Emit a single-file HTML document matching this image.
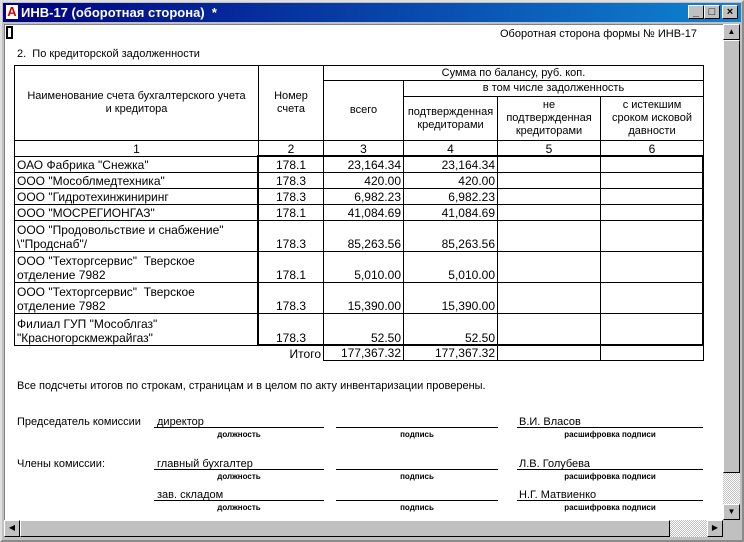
<!DOCTYPE html>
<html><head><meta charset="utf-8"><style>
*{margin:0;padding:0;box-sizing:border-box}
body{width:744px;height:542px;background:#c0c0c0;font-family:"Liberation Sans",Arial,sans-serif;position:relative;overflow:hidden;color:#000}
.abs{position:absolute}
#frame{left:0;top:0;width:744px;height:542px;border:2px outset #dfdfdf;background:#c0c0c0}
#title{left:3px;top:3px;width:738px;height:19px;background:linear-gradient(90deg,#000080,#1084d0);color:#fff;font-weight:bold;font-size:13px;line-height:19px}
.btn{top:5px;width:16px;height:14px;background:#c0c0c0;border:1px solid;border-color:#fff #000 #000 #fff;font-size:11px;line-height:12px;text-align:center;color:#000;font-weight:bold}
#client{left:4px;top:24px;width:719px;height:496px;background:#fff;border-left:1px solid #808080;border-top:1px solid #808080}
table{border-collapse:collapse;table-layout:fixed;position:absolute;left:14px;top:65px;font-size:11px}
td{border:1px solid #000;padding:0 2px;overflow:hidden;white-space:nowrap}
.h{text-align:center;vertical-align:middle;white-space:normal;line-height:13px}
.d td{font-size:12px;vertical-align:bottom;line-height:14px}
.r{text-align:right}.c{text-align:center}
.w{white-space:normal}
.sig{font-size:11px}
.lbl{font-size:8px;font-weight:bold;text-align:center}
.sbtn{background:#c0c0c0;border:1px solid;border-color:#fff #000 #000 #fff;font-size:8px;text-align:center;line-height:14px}
</style></head><body>
<div id="frame" class="abs"></div>
<div id="title" class="abs"><span style="display:inline-block;width:12px;height:14px;background:#fff;color:#d00;font-size:13px;line-height:14px;text-align:center;margin:2px 3px 0 3px;vertical-align:top">A</span>ИНВ-17 (оборотная сторона)&nbsp; *</div>
<div class="abs btn" style="left:688px">_</div>
<div class="abs btn" style="left:704px">□</div>
<div class="abs btn" style="left:722px">×</div>
<div id="client" class="abs"></div>
<div class="abs" style="left:6px;top:26px;width:7px;height:13px;background:#000"><div style="margin:2px;width:3px;height:9px;background:#fff"></div></div>
<div class="abs" style="left:500px;top:28px;font-size:11px">Оборотная сторона формы № ИНВ-17</div>
<div class="abs" style="left:17px;top:48px;font-size:11px">2.&nbsp; По кредиторской задолженности</div>

<table>
<colgroup><col style="width:244px"><col style="width:65px"><col style="width:80px"><col style="width:94px"><col style="width:103px"><col style="width:103px"></colgroup>
<tr style="height:15px"><td class="h" rowspan="3">Наименование счета бухгалтерского учета<br>и кредитора</td><td class="h" rowspan="3">Номер<br>счета</td><td class="h" colspan="4">Сумма по балансу, руб. коп.</td></tr>
<tr style="height:16px"><td class="h" rowspan="2">всего</td><td class="h" colspan="3">в том числе задолженность</td></tr>
<tr style="height:44px"><td class="h">подтвержденная<br>кредиторами</td><td class="h">не<br>подтвержденная<br>кредиторами</td><td class="h">с истекшим<br>сроком исковой<br>давности</td></tr>
<tr style="height:16px;font-size:12px"><td class="c">1</td><td class="c">2</td><td class="c">3</td><td class="c">4</td><td class="c">5</td><td class="c">6</td></tr>
<tr class="d" style="height:16px"><td>ОАО Фабрика "Снежка"</td><td class="c">178.1</td><td class="r">23,164.34</td><td class="r">23,164.34</td><td></td><td></td></tr>
<tr class="d" style="height:16px"><td>ООО "Мособлмедтехника"</td><td class="c">178.3</td><td class="r">420.00</td><td class="r">420.00</td><td></td><td></td></tr>
<tr class="d" style="height:16px"><td>ООО "Гидротехинжиниринг</td><td class="c">178.3</td><td class="r">6,982.23</td><td class="r">6,982.23</td><td></td><td></td></tr>
<tr class="d" style="height:16px"><td>ООО "МОСРЕГИОНГАЗ"</td><td class="c">178.1</td><td class="r">41,084.69</td><td class="r">41,084.69</td><td></td><td></td></tr>
<tr class="d" style="height:31px"><td class="w">ООО "Продовольствие и снабжение"<br>\"Продснаб"/</td><td class="c">178.3</td><td class="r">85,263.56</td><td class="r">85,263.56</td><td></td><td></td></tr>
<tr class="d" style="height:31px"><td class="w">ООО "Техторгсервис"&nbsp; Тверское<br>отделение 7982</td><td class="c">178.1</td><td class="r">5,010.00</td><td class="r">5,010.00</td><td></td><td></td></tr>
<tr class="d" style="height:31px"><td class="w">ООО "Техторгсервис"&nbsp; Тверское<br>отделение 7982</td><td class="c">178.3</td><td class="r">15,390.00</td><td class="r">15,390.00</td><td></td><td></td></tr>
<tr class="d" style="height:32px"><td class="w">Филиал ГУП "Мособлгаз"<br>"Красногорскмежрайгаз"</td><td class="c">178.3</td><td class="r">52.50</td><td class="r">52.50</td><td></td><td></td></tr>
<tr class="d" style="height:15px"><td style="border:none"></td><td class="r" style="border:none;border-right:1px solid #000">Итого</td><td class="r">177,367.32</td><td class="r">177,367.32</td><td></td><td></td></tr>
</table>
<div class="abs" style="left:257px;top:155px;width:447px;height:191px;border:2px solid #000"></div>

<div class="abs" style="left:17px;top:380px;font-size:11px">Все подсчеты итогов по строкам, страницам и в целом по акту инвентаризации проверены.</div>

<div class="abs sig" style="left:17px;top:416px">Председатель комиссии</div>
<div class="abs sig" style="left:157px;top:416px">директор</div>
<div class="abs sig" style="left:519px;top:416px">В.И. Власов</div>
<div class="abs sig" style="left:17px;top:458px">Члены комиссии:</div>
<div class="abs sig" style="left:157px;top:458px">главный бухгалтер</div>
<div class="abs sig" style="left:519px;top:458px">Л.В. Голубева</div>
<div class="abs sig" style="left:157px;top:489px">зав. складом</div>
<div class="abs sig" style="left:519px;top:489px">Н.Г. Матвиенко</div>

<div class="abs" style="left:154px;top:427px;width:170px;border-top:1px solid #000"></div>
<div class="abs" style="left:336px;top:427px;width:162px;border-top:1px solid #000"></div>
<div class="abs" style="left:517px;top:427px;width:186px;border-top:1px solid #000"></div>
<div class="abs" style="left:154px;top:469px;width:170px;border-top:1px solid #000"></div>
<div class="abs" style="left:336px;top:469px;width:162px;border-top:1px solid #000"></div>
<div class="abs" style="left:517px;top:469px;width:186px;border-top:1px solid #000"></div>
<div class="abs" style="left:154px;top:500px;width:170px;border-top:1px solid #000"></div>
<div class="abs" style="left:336px;top:500px;width:162px;border-top:1px solid #000"></div>
<div class="abs" style="left:517px;top:500px;width:186px;border-top:1px solid #000"></div>

<div class="abs lbl" style="left:154px;top:430px;width:170px">должность</div>
<div class="abs lbl" style="left:336px;top:430px;width:162px">подпись</div>
<div class="abs lbl" style="left:517px;top:430px;width:186px">расшифровка подписи</div>
<div class="abs lbl" style="left:154px;top:472px;width:170px">должность</div>
<div class="abs lbl" style="left:336px;top:472px;width:162px">подпись</div>
<div class="abs lbl" style="left:517px;top:472px;width:186px">расшифровка подписи</div>
<div class="abs lbl" style="left:154px;top:503px;width:170px">должность</div>
<div class="abs lbl" style="left:336px;top:503px;width:162px">подпись</div>
<div class="abs lbl" style="left:517px;top:503px;width:186px">расшифровка подписи</div>

<div class="abs" style="left:723px;top:24px;width:17px;height:496px;background:repeating-conic-gradient(#c0c0c0 0 25%,#fff 0 50%) 0 0/2px 2px"></div>
<div class="abs sbtn" style="left:723px;top:24px;width:17px;height:16px">▲</div>
<div class="abs" style="left:723px;top:40px;width:17px;height:433px;background:#c0c0c0;border:1px solid;border-color:#fff #000 #000 #fff"></div>
<div class="abs sbtn" style="left:723px;top:504px;width:17px;height:16px">▼</div>
<div class="abs" style="left:4px;top:520px;width:719px;height:17px;background:repeating-conic-gradient(#c0c0c0 0 25%,#fff 0 50%) 0 0/2px 2px"></div>
<div class="abs sbtn" style="left:4px;top:520px;width:16px;height:17px">◀</div>
<div class="abs" style="left:20px;top:520px;width:650px;height:17px;background:#c0c0c0;border:1px solid;border-color:#fff #000 #000 #fff"></div>
<div class="abs sbtn" style="left:707px;top:520px;width:16px;height:17px">▶</div>
<div class="abs" style="left:723px;top:520px;width:17px;height:17px;background:#c0c0c0"></div>
</body></html>
